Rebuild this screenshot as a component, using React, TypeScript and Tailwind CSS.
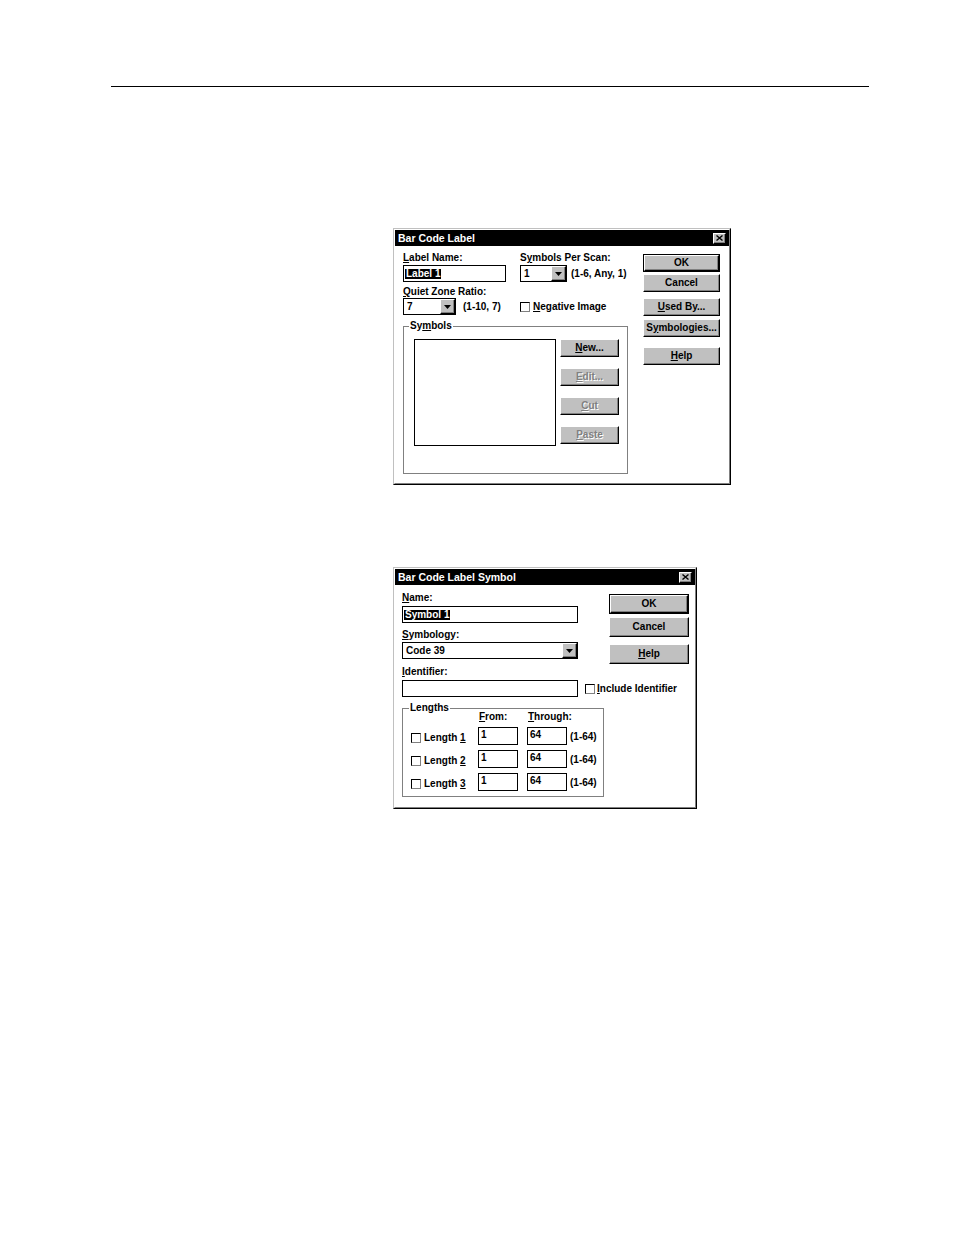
import React from 'react';

const FONT = "font-['Liberation_Sans',Arial,Helvetica,sans-serif] font-bold text-[10px] leading-[12px] text-black";

function U({ children }: { children: React.ReactNode }) {
  return <span className="underline decoration-1 underline-offset-1">{children}</span>;
}

function Btn({
  children,
  def,
  disabled,
  className = '',
}: {
  children: React.ReactNode;
  def?: boolean;
  disabled?: boolean;
  className?: string;
}) {
  const inner = (
    <div
      className={`flex h-full w-full items-center justify-center border border-t-white border-l-white border-r-black border-b-black bg-[#c0c0c0] shadow-[inset_-1px_-1px_0_#808080] ${
        disabled ? 'text-[#808080] [text-shadow:1px_1px_0_#ffffff]' : 'text-black'
      }`}
    >
      <span>{children}</span>
    </div>
  );
  if (def) return <div className={`border border-black ${className}`}>{inner}</div>;
  return <div className={className}>{inner}</div>;
}

function Check({ className = '' }: { className?: string }) {
  return (
    <div
      className={`h-[10px] w-[10px] shrink-0 border border-t-black border-l-black border-r-[#808080] border-b-[#808080] bg-white ${className}`}
    />
  );
}

function Arrow() {
  return (
    <div className="flex h-full w-[15px] items-center justify-center border border-t-white border-l-white border-r-black border-b-black bg-[#c0c0c0] shadow-[inset_-1px_-1px_0_#808080]">
      <svg width="7" height="4" viewBox="0 0 7 4">
        <path d="M0 0H7L3.5 4Z" fill="black" />
      </svg>
    </div>
  );
}

function CloseBtn() {
  return (
    <div className="flex h-[11px] w-[13px] items-center justify-center border border-t-white border-l-white border-r-black border-b-black bg-[#c0c0c0] shadow-[inset_-1px_-1px_0_#808080]">
      <svg width="7" height="6" viewBox="0 0 7 6">
        <path d="M0.5 0.5L6.5 5.5M6.5 0.5L0.5 5.5" stroke="black" strokeWidth="1.4" />
      </svg>
    </div>
  );
}

function TitleBar({ title }: { title: string }) {
  return (
    <div className="flex h-[16px] items-center justify-between bg-black pl-[3px] pr-[3px]">
      <span className="text-[10.5px] text-white">{title}</span>
      <CloseBtn />
    </div>
  );
}

function Frame({ children, className }: { children: React.ReactNode; className: string }) {
  return (
    <div className={`flex flex-col border border-t-[#c0c0c0] border-l-[#c0c0c0] border-r-black border-b-black bg-white ${className}`}>
      <div className="flex flex-1 flex-col border border-t-white border-l-white border-r-[#808080] border-b-[#808080]">
        {children}
      </div>
    </div>
  );
}

function Dialog1() {
  return (
    <Frame className="h-[257px] w-[338px]">
      <TitleBar title="Bar Code Label" />
      <div className="flex pl-[8px]">
        <div className="flex w-[225px] flex-col pt-[6px]">
          <div className="flex">
            <div className="w-[117px]">
              <div>
                <U>L</U>abel Name:
              </div>
              <div className="mt-px flex h-[17px] w-[103px] items-center border border-black bg-white pl-[1px]">
                <span className="bg-black px-px leading-[10px] text-white">Label 1</span>
              </div>
            </div>
            <div>
              <div>
                S<U>y</U>mbols Per Scan:
              </div>
              <div className="mt-px flex items-center">
                <div className="flex h-[17px] w-[47px] items-center border border-black bg-white">
                  <span className="flex-1 pl-[3px]">1</span>
                  <Arrow />
                </div>
                <span className="ml-[4px]">(1-6, Any, 1)</span>
              </div>
            </div>
          </div>
          <div className="mt-[4px] flex">
            <div className="w-[117px]">
              <div>
                <U>Q</U>uiet Zone Ratio:
              </div>
              <div className="flex items-center">
                <div className="flex h-[17px] w-[53px] items-center border border-black bg-white">
                  <span className="flex-1 pl-[3px]">7</span>
                  <Arrow />
                </div>
                <span className="ml-[7px]">(1-10, 7)</span>
              </div>
            </div>
            <div className="pt-[12px]">
              <div className="flex h-[17px] items-center">
                <Check />
                <span className="ml-[3px]">
                  <U>N</U>egative Image
                </span>
              </div>
            </div>
          </div>
          <fieldset className="mt-[5px] w-[225px] border border-[#808080] px-[5px] pb-[27px]">
            <legend className="px-px leading-[12px]">
              Sy<U>m</U>bols
            </legend>
            <div className="ml-[5px] mt-[7px] flex">
              <div className="h-[107px] w-[142px] border border-black bg-white" />
              <div className="ml-[4px] flex w-[59px] flex-col">
                <Btn className="h-[18px]">
                  <U>N</U>ew...
                </Btn>
                <Btn className="mt-[11px] h-[18px]" disabled>
                  <U>E</U>dit...
                </Btn>
                <Btn className="mt-[11px] h-[18px]" disabled>
                  <U>C</U>ut
                </Btn>
                <Btn className="mt-[11px] h-[18px]" disabled>
                  <U>P</U>aste
                </Btn>
              </div>
            </div>
          </fieldset>
        </div>
        <div className="ml-[15px] flex w-[77px] flex-col pt-[8px]">
          <Btn def className="h-[18px]">
            OK
          </Btn>
          <Btn className="mt-[2px] h-[18px]">Cancel</Btn>
          <Btn className="mt-[6px] h-[18px]">
            <U>U</U>sed By...
          </Btn>
          <Btn className="mt-[3px] h-[18px]">
            S<U>y</U>mbologies...
          </Btn>
          <Btn className="mt-[10px] h-[18px]">
            <U>H</U>elp
          </Btn>
        </div>
      </div>
    </Frame>
  );
}

function SmallInput({ value, className = '' }: { value: string; className?: string }) {
  return (
    <div className={`h-[18px] w-[40px] shrink-0 border border-black bg-white pl-[2px] pt-[2px] leading-[10px] ${className}`}>
      {value}
    </div>
  );
}

function LengthRow({ n, first }: { n: string; first?: boolean }) {
  return (
    <div className={`${first ? 'mt-[4px]' : 'mt-[5px]'} flex h-[18px] items-end pl-[2px]`}>
      <Check className="mb-[2px]" />
      <div className="mb-px ml-[3px] w-[54px]">
        Length <U>{n}</U>
      </div>
      <SmallInput value="1" />
      <SmallInput value="64" className="ml-[9px]" />
      <span className="mb-[2px] ml-[3px]">(1-64)</span>
    </div>
  );
}

function Dialog2() {
  return (
    <Frame className="h-[242px] w-[304px]">
      <TitleBar title="Bar Code Label Symbol" />
      <div className="pl-[7px] pt-[7px]">
        <div className="flex">
          <div className="w-[176px]">
            <div>
              <U>N</U>ame:
            </div>
            <div className="mt-[2px] flex h-[17px] w-[176px] items-center border border-black bg-white pl-[1px]">
              <span className="bg-black px-px leading-[10px] text-white">Symbol 1</span>
            </div>
            <div className="mt-[6px]">
              <U>S</U>ymbology:
            </div>
            <div className="mt-px flex h-[17px] w-[176px] items-center border border-black bg-white">
              <span className="flex-1 pl-[3px]">Code 39</span>
              <Arrow />
            </div>
          </div>
          <div className="ml-[31px] mt-[2px] flex w-[80px] flex-col">
            <Btn def className="h-[20px]">
              OK
            </Btn>
            <Btn className="mt-[3px] h-[20px]">Cancel</Btn>
            <Btn className="mt-[7px] h-[20px]">
              <U>H</U>elp
            </Btn>
          </div>
        </div>
        <div className="mt-[2px]">
          <U>I</U>dentifier:
        </div>
        <div className="mt-[2px] flex items-center">
          <div className="h-[17px] w-[176px] border border-black bg-white" />
          <div className="ml-[7px] flex items-center">
            <Check />
            <span className="ml-[2px]">
              <U>I</U>nclude Identifier
            </span>
          </div>
        </div>
        <fieldset className="mt-[5px] w-[202px] border border-[#808080] px-[6px] pb-[5px]">
          <legend className="px-px leading-[12px]">Lengths</legend>
          <div className="-mt-[3px] flex">
            <div className="w-[70px]" />
            <div className="w-[49px]">
              <U>F</U>rom:
            </div>
            <div>
              <U>T</U>hrough:
            </div>
          </div>
          <LengthRow n="1" first />
          <LengthRow n="2" />
          <LengthRow n="3" />
        </fieldset>
      </div>
    </Frame>
  );
}

export default function App() {
  return (
    <div className={`min-h-[1235px] w-[954px] bg-white ${FONT}`}>
      <div className="pl-[111px] pt-[86px]">
        <div className="h-px w-[758px] bg-black" />
      </div>
      <div className="pl-[393px] pt-[141px]">
        <Dialog1 />
      </div>
      <div className="pl-[393px] pt-[82px]">
        <Dialog2 />
      </div>
    </div>
  );
}
